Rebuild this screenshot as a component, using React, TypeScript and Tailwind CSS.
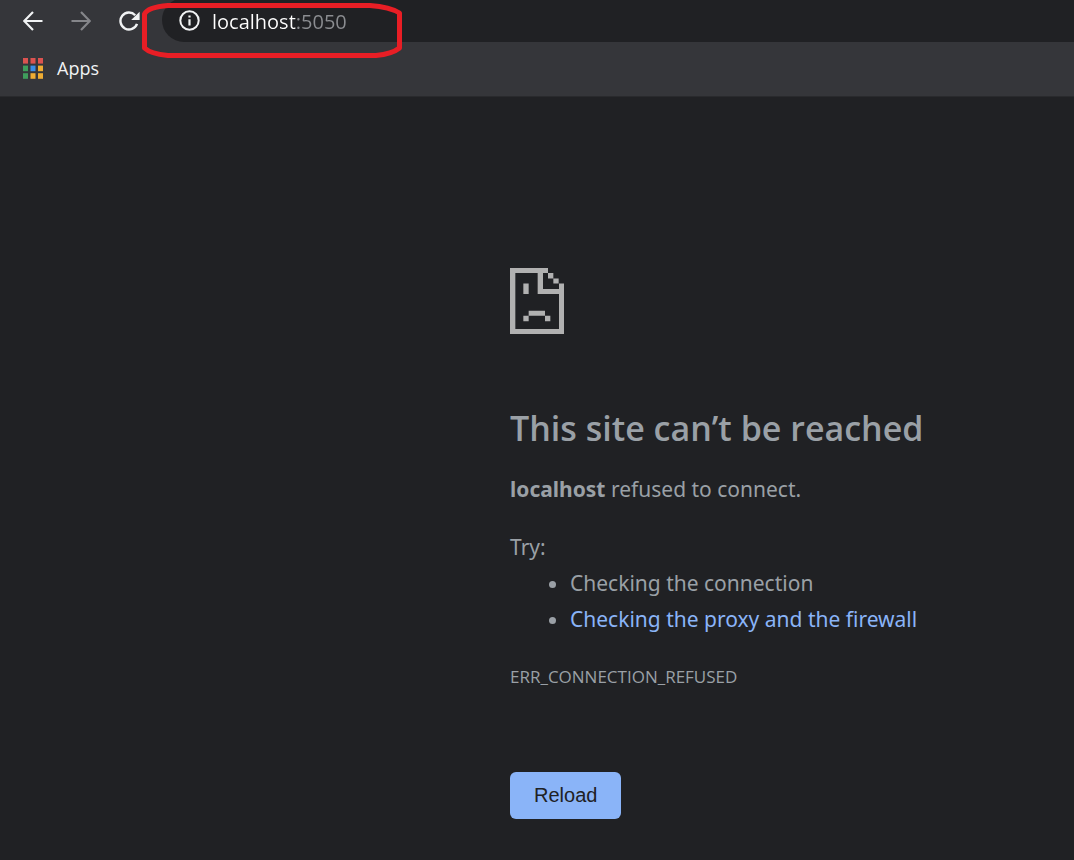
import { useState } from "react";

function BackIcon() {
  return (
    <svg width="20" height="20" viewBox="0 0 20 20" fill="none" stroke="currentColor" strokeWidth="2.2" aria-hidden="true">
      <path d="M19.5 10H1.8M10 1L1.2 10L10 19" />
    </svg>
  );
}

function ForwardIcon() {
  return (
    <svg width="20" height="20" viewBox="0 0 20 20" fill="none" stroke="currentColor" strokeWidth="2.2" aria-hidden="true">
      <path d="M.5 10H18.2M10 1L18.8 10L10 19" />
    </svg>
  );
}

function ReloadIcon() {
  return (
    <svg width="22" height="20" viewBox="0 0 22 20" aria-hidden="true">
      <path d="M18 12.8A8.5 8.5 0 1 1 16.2 4.2" fill="none" stroke="currentColor" strokeWidth="2.4" />
      <path d="M20.6 .8V9H12.2Z" fill="currentColor" />
    </svg>
  );
}

function InfoIcon() {
  return (
    <svg width="21" height="21" viewBox="0 0 21 21" aria-hidden="true">
      <circle cx="10.5" cy="10.5" r="9.2" fill="none" stroke="currentColor" strokeWidth="2" />
      <path d="M9.4 5.4h2.2v2.2H9.4zM9.4 9.2h2.2v6.2H9.4z" fill="currentColor" />
    </svg>
  );
}

const dots = ["#db5350", "#db5350", "#db5350", "#3f9e5c", "#3a8de8", "#eeac33", "#3f9e5c", "#eeac33", "#eeac33"];

function AppsIcon() {
  return (
    <svg width="20" height="21" viewBox="0 0 20 21" aria-hidden="true">
      {dots.map((color, i) => (
        <rect key={i} x={(i % 3) * 7.5} y={Math.floor(i / 3) * 7.6} width="5" height="5.6" fill={color} />
      ))}
    </svg>
  );
}

function SadPageIcon() {
  return (
    <svg width="54" height="66" viewBox="0 0 162 195" preserveAspectRatio="none" fill="#b1b1b1" aria-hidden="true">
      <path d="M0 0H114V15H99V62H147V46H162V195H0ZM16 15V180H147V77H83V15Z" fillRule="evenodd" />
      <path d="M114 15h16v16h-16zM130 31h16v15h-16zM40 46h16v31H40zM56 126h49v15H56zM40 141h16v16H40zM105 141h16v16h-16z" />
    </svg>
  );
}

export default function App() {
  const [url, setUrl] = useState("localhost:5050");
  return (
    <div className="min-h-screen overflow-hidden bg-[#202124] font-['Open_Sans','Noto_Sans',sans-serif] text-[#9aa0a6]">
      <header className="relative border-b border-[#292a2d] bg-[#35363a] text-[#f1f3f4]">
        <nav aria-label="Navigation" className="flex h-[42px] items-center pl-[23px]">
          <button type="button" aria-label="Back" className="mr-7">
            <BackIcon />
          </button>
          <button type="button" aria-label="Forward" className="mr-7 text-[#85868a]">
            <ForwardIcon />
          </button>
          <button type="button" aria-label="Reload page" className="mr-[21px]">
            <ReloadIcon />
          </button>
          <div className="-mt-0.5 flex h-11 flex-1 items-center rounded-l-full bg-[#202124] pl-[17px]">
            <button type="button" aria-label="View site information" className="mr-3">
              <InfoIcon />
            </button>
            <input
              aria-label="Address"
              value={url}
              onChange={(e) => setUrl(e.target.value)}
              spellCheck={false}
              className="min-w-0 flex-1 bg-[linear-gradient(to_right,#ffffff_85px,#8b8d91_85px)] bg-clip-text pt-1 text-xl text-transparent caret-white outline-none"
            />
          </div>
        </nav>
        <div className="flex h-[54px] items-center pb-0.5 pl-[23px]">
          <a href="#apps" className="flex items-center gap-3.5 text-lg">
            <AppsIcon />
            Apps
          </a>
        </div>
        <svg className="pointer-events-none absolute left-[142px] top-[3px]" width="260" height="55" viewBox="0 0 260 55" fill="none" stroke="#e81e25" strokeWidth="5" aria-hidden="true">
          <path d="M26 2.5H228Q248 4 257.5 10V45Q250 51 234 52.5H26Q8 50.5 2.5 45V11Q6 4 26 2.5Z" strokeLinejoin="round" />
        </svg>
      </header>
      <main className="pb-10 pl-[510px] pt-[171px] font-['Noto_Sans','Open_Sans',sans-serif] text-[21px] leading-9">
        <SadPageIcon />
        <h1 className="mt-[68px] font-['Open_Sans','Noto_Sans',sans-serif] text-[34px] font-semibold leading-[52px]">This site can’t be reached</h1>
        <p className="mt-[17px]">
          <strong className="font-bold">localhost</strong> refused to connect.
        </p>
        <p className="mt-[22px]">Try:</p>
        <ul className="list-disc pl-[60px]">
          <li>Checking the connection</li>
          <li>
            <a href="#proxy" className="text-[#8ab4f8]">Checking the proxy and the firewall</a>
          </li>
        </ul>
        <p className="mt-[22px] font-['Open_Sans','Noto_Sans',sans-serif] text-[17px] leading-9">ERR_CONNECTION_REFUSED</p>
        <button
          type="button"
          className="mt-[77px] block rounded-md bg-[#8ab4f8] px-6 py-2 font-['Liberation_Sans',sans-serif] text-xl leading-[31px] text-[#202124]"
        >
          Reload
        </button>
      </main>
    </div>
  );
}
